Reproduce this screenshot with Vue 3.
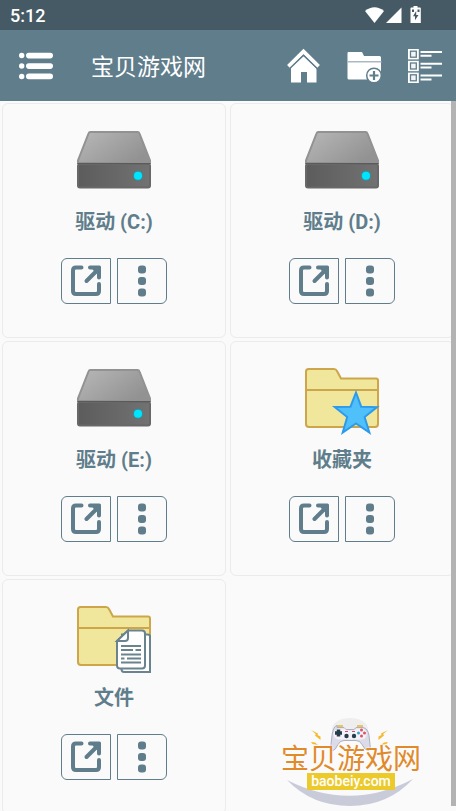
<script setup>
const places = [
  { label: '驱动 (C:)', icon: 'drive' },
  { label: '驱动 (D:)', icon: 'drive' },
  { label: '驱动 (E:)', icon: 'drive' },
  { label: '收藏夹', icon: 'favorites' },
  { label: '文件', icon: 'documents' },
]
</script>

<template>
  <div class="screen">
    <div class="status">
      <span class="clock">5:12</span>
      <svg class="status-icons" viewBox="364 4 60 22" aria-hidden="true">
        <path d="M365 11Q374.500 3.500 384 11L374.500 23Z" fill="#fff" />
        <path d="M401.500 7.500V23H386Z" fill="#fff" />
        <path d="M413.500 6h4v1.500h2.500q.8 0 .8.800V23H410.500V8.300q0-.8.800-.8h2.200Z" fill="#fff" />
        <path d="M416.200 11l-3.200 5.200h2v4l3.500-5.200h-2.300ZM412 9.500h2v2.500h-2ZM417.500 9.500h2v2.500h-2Z" fill="#465a65" />
      </svg>
    </div>

    <header class="toolbar">
      <button class="tool" type="button" aria-label="菜单">
        <svg width="34" height="28" viewBox="0 0 34 28" fill="#fff">
          <circle cx="2.700" cy="3.500" r="2.700" /><circle cx="2.700" cy="14" r="2.700" /><circle cx="2.700" cy="24.500" r="2.700" />
          <rect x="7" y="0.700" width="27" height="5.700" rx="2.800" /><rect x="7" y="11.200" width="27" height="5.700" rx="2.800" /><rect x="7" y="21.600" width="27" height="5.700" rx="2.800" />
        </svg>
      </button>
      <h1 class="title">宝贝游戏网</h1>
      <nav class="actions">
        <button class="tool" type="button" aria-label="主页">
          <svg width="34" height="36" viewBox="0 0 34 36">
            <path d="M2.500 18.500L17.500 3.500L32.500 18.500" fill="none" stroke="#fff" stroke-width="4" />
            <path d="M5 19.500L17.500 8L30.500 20.500V34.500H21V24h-6v10.500H5Z" fill="#fff" />
            <path d="M4 20.300L17.500 7.200L31.500 20.800" fill="none" stroke="#607d8b" stroke-width="1.500" />
          </svg>
        </button>
        <button class="tool" type="button" aria-label="新建文件夹">
          <svg width="36" height="36" viewBox="0 0 36 36">
            <path d="M2.500 4H16l2 4H33.500q1.500 0 1.500 1.500V31.500H3q-1.500 0-1.500-1.500V5q0-1 1-1Z" fill="#fff" />
            <path d="M1 13.800H35.500" stroke="#a9bac2" stroke-width="1.500" />
            <circle cx="28" cy="27.500" r="7.300" fill="#fff" stroke="#607d8b" stroke-width="1.500" />
            <path d="M23.500 27.500h9M28 23v9" stroke="#607d8b" stroke-width="2.200" />
          </svg>
        </button>
        <button class="tool" type="button" aria-label="列表视图">
          <svg width="34" height="36" viewBox="0 0 34 36">
            <g v-for="n in 3" :key="n" :transform="`translate(0 ${(n - 1) * 11.8})`">
              <rect x="0" y="1" width="10.800" height="10.400" fill="#fff" />
              <rect x="2.500" y="3.200" width="5.800" height="6" fill="#f2f5f6" stroke="#607d8b" stroke-width="1.300" />
              <path d="M12.500 4H34M12.500 7.800H23.500" stroke="#fff" stroke-width="2" />
            </g>
          </svg>
        </button>
      </nav>
    </header>

    <main class="content">
      <ul class="grid">
        <li v-for="place in places" :key="place.label" class="card">
          <svg v-if="place.icon === 'drive'" class="picture" viewBox="0 0 76 70" aria-hidden="true">
            <defs>
              <linearGradient id="lid" x1="0" x2="1" y2="0.600"><stop stop-color="#b8b8b8" /><stop offset="1" stop-color="#929292" /></linearGradient>
              <linearGradient id="front" x1="0" x2="1"><stop stop-color="#5c5c5c" /><stop offset="1" stop-color="#727272" /></linearGradient>
            </defs>
            <path d="M14.500 3h47q1.500 0 2 1.500L74 31.500V34H2v-2.500L12.500 4.500q.5-1.500 2-1.500Z" fill="url(#lid)" stroke="#929292" stroke-width="2" />
            <rect x="2" y="35" width="72" height="23.500" rx="2" fill="url(#front)" stroke="#686868" stroke-width="2" />
            <path d="M1.500 34.500h73" stroke="#5a5a5a" />
            <circle cx="62" cy="46.700" r="5" fill="#2f929c" />
            <circle cx="62" cy="46.700" r="4" fill="#00e5ff" />
          </svg>
          <svg v-else class="picture" viewBox="0 0 76 70" aria-hidden="true">
            <path d="M4.500 2H30q2 0 3 2l4 7.500h35q2 0 2 2V57q0 3-3 3H5q-3 0-3-3V4.500Q2 2 4.500 2Z" fill="#f0e69c" stroke="#cda64b" stroke-width="2" />
            <path d="M2 23h72" stroke="#cda64b" stroke-width="2" />
            <path v-if="place.icon === 'favorites'" d="M52 25.500l5.200 14.200 15.800.4-12.400 9.900 4.800 15.500L52 56.500l-13.300 9 4.500-15.500-12.500-10 15.800-.3Z" fill="#4fc0f9" stroke="#2d9bed" stroke-width="2" />
            <g v-else stroke="#69838f" stroke-width="2">
              <path d="M46 29.500h25.500q2.500 0 2.500 2v35.500H48q-2.500 0-2.500-3Z" fill="#fff" />
              <path d="M52 25.500h14q3 0 3 3v32q0 3-3 3H44q-3 0-3-3V36Z" fill="#fff" />
              <path d="M52 25.500v7.500q0 3-3 3h-8Z" fill="#fff" />
              <path d="M45 41h20M45 45h12M59.500 45H65M45 49.500h20M45 53.500h3.500M51 53.500h14M45 57.500h20" fill="none" />
            </g>
          </svg>
          <h2 class="label">{{ place.label }}</h2>
          <div class="buttons">
            <button class="open" type="button" :aria-label="`打开 ${place.label}`">
              <svg width="32" height="32" viewBox="0 0 32 32" fill="none" stroke="#607d8b" stroke-width="4" stroke-linecap="round">
                <path d="M11.500 2.500H6q-3 0-3 3V26q0 3 3 3h20q3 0 3-3v-7" />
                <path d="M16.500 16L26 6.500" />
                <path d="M20 .5H29.500Q31 .5 31 2V12.500Q31 14.500 29 14.500T27 12.500V9L22.500 4.500H20Q18 4.500 18 2.500T20 .5Z" fill="#607d8b" stroke="none" />
              </svg>
            </button>
            <button class="more" type="button" :aria-label="`更多 ${place.label}`">
              <svg width="8" height="32" viewBox="0 0 8 32" fill="#607d8b">
                <rect y="0.500" width="8" height="8" rx="3" /><rect y="12" width="8" height="8" rx="3" /><rect y="23.500" width="8" height="8" rx="3" />
              </svg>
            </button>
          </div>
        </li>
      </ul>
      <div class="scrollbar"></div>
    </main>

    <div class="brand">
      <svg class="brand-art" viewBox="280 717 146 90" aria-hidden="true">
        <ellipse cx="350" cy="729" rx="18" ry="11" fill="#eeeeee" />
        <path d="M287 780Q350 812 413 779Q388 806 350 806Q312 806 287 780Z" fill="#c9cbd9" />
        <path d="M337 726h6M357 726h6" stroke="#e9c55c" stroke-width="2" />
        <path d="M337 727.500h7l2 2h8l2-2h7q5 1 6 8l1 9q1 6-2 6-3 0-6-6-2-4-6-4H344q-4 0-6 4-3 6-5 6-3 0-2-6l1-9q1-9 5-10Z" fill="#dcdce8" stroke="#aeb0c2" stroke-width="1" />
        <path d="M338.500 728.500q-5 1-5 5.500t5 5.500h22q6 0 6-5.500t-5-5.500h-5l-2 2h-8l-2-2Z" fill="#f3f2f8" />
        <path d="M338.500 729.500v7M335 733h7" stroke="#263c4b" stroke-width="3.500" />
        <circle cx="346.500" cy="736" r="2.200" fill="#263c4b" /><circle cx="354" cy="736" r="2.200" fill="#263c4b" />
        <path d="M345 731.500h3M352 731.500h3" stroke="#d64c68" />
        <circle cx="361.500" cy="730" r="1.500" fill="#e05263" /><circle cx="361.500" cy="736" r="1.500" fill="#e05263" />
        <circle cx="358.500" cy="733" r="1.500" fill="#33a8c4" /><circle cx="364.500" cy="733" r="1.500" fill="#e05263" />
        <path d="M311 730l7 3.500-.5 1.500 3 1.500v3.500l-5.500-4.500.8-1.500ZM388 730l-7 3.500.5 1.500-3 1.500v3.500l5.500-4.500-.8-1.500ZM311 742l4 .5 3 2.500-5.500-1ZM388 742l-4 .5-3 2.500 5.500-1Z" fill="#f5b92d" />
      </svg>
      <span class="brand-name">宝贝游戏网</span>
      <span class="brand-site">baobeiy.com</span>
    </div>
  </div>
</template>

<style>
body {
  margin: 0;
  background: #fafafa;
}
</style>

<style scoped>
.screen {
  position: relative;
  display: flex;
  flex-direction: column;
  height: 100vh;
  overflow: hidden;
  background: #fafafa;
  font-family: Roboto, "Noto Sans CJK SC", sans-serif;
}
.status {
  display: flex;
  flex: none;
  align-items: center;
  justify-content: space-between;
  height: 30px;
  padding: 0 32px 0 10px;
  background: #465a65;
  color: #fff;
}
.clock {
  padding-top: 2px;
  font-size: 18px;
  font-weight: 500;
  line-height: 24px;
}
.status-icons {
  width: 60px;
  height: 22px;
}
.toolbar {
  display: flex;
  flex: none;
  align-items: center;
  box-sizing: border-box;
  height: 71px;
  padding: 0 14px 0 19px;
  background: #607d8b;
}
button {
  padding: 0;
  border: 0;
  background: none;
  cursor: pointer;
}
svg {
  display: block;
}
.title {
  flex: 1;
  margin: 0 0 0 38px;
  padding-top: 4px;
  color: #fff;
  font-size: 23px;
  font-weight: 400;
  line-height: 32px;
}
.actions {
  display: flex;
  gap: 26px;
}
.content {
  position: relative;
  flex: 1;
  min-height: 0;
  overflow: hidden;
}
.grid {
  display: grid;
  grid-template-columns: 1fr 1fr;
  gap: 3px 4px;
  margin: 0;
  padding: 2px;
  list-style: none;
}
.card {
  display: flex;
  flex-direction: column;
  align-items: center;
  box-sizing: border-box;
  height: 235px;
  padding-top: 25px;
  border: 1px solid #ebebeb;
  border-radius: 6px;
}
.picture {
  flex: none;
  width: 76px;
  height: 70px;
}
.label {
  margin: 9px 0 22px;
  color: #607d8b;
  font-size: 20px;
  font-weight: 700;
  line-height: 28px;
}
.buttons {
  display: flex;
  gap: 6px;
}
.open,
.more {
  display: flex;
  align-items: center;
  justify-content: center;
  box-sizing: border-box;
  width: 50px;
  height: 46px;
  border: 1px solid #607d8b;
}
.open {
  border-radius: 6px 0 0 6px;
}
.more {
  border-radius: 0 6px 6px 0;
}
.scrollbar {
  position: absolute;
  top: 0;
  right: 0;
  bottom: 5px;
  width: 5px;
  background: #b3b3b3;
}
.brand {
  position: absolute;
  right: 30px;
  bottom: 4px;
  display: flex;
  flex-direction: column;
  align-items: center;
  box-sizing: border-box;
  width: 146px;
  height: 90px;
  padding: 30px 4px 0 0;
}
.brand-art {
  position: absolute;
  top: 0;
  left: 0;
  width: 146px;
  height: 90px;
}
.brand-name,
.brand-site {
  position: relative;
  white-space: nowrap;
}
.brand-name {
  color: #e08a2c;
  font-size: 28px;
  line-height: 26px;
  text-shadow: 0 0 2px #fff, 0 0 2px #fff;
}
.brand-site {
  padding: 0 4px;
  background: #ecca2b;
  color: #fff;
  font-size: 14px;
  font-weight: 500;
  line-height: 17px;
}
</style>
